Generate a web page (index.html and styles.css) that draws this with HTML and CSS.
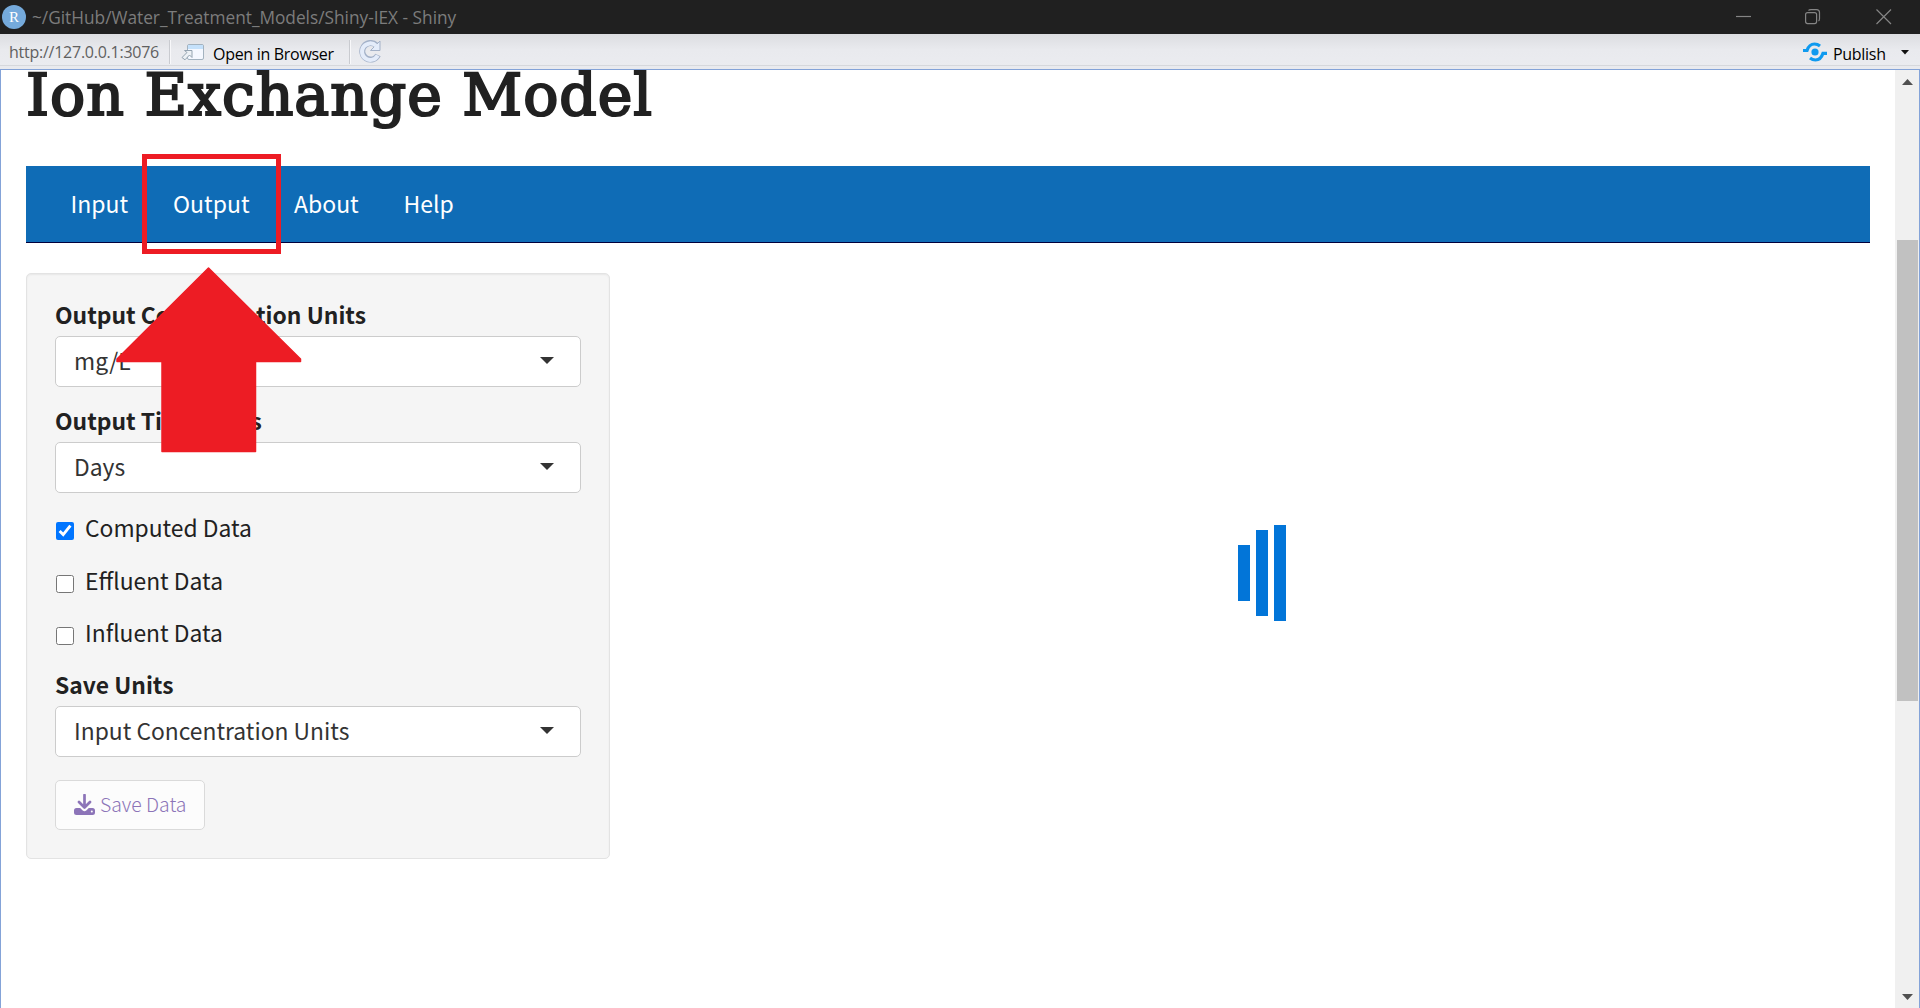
FILE: index.html
```html
<!DOCTYPE html>
<html lang="en">
<head>
<meta charset="utf-8">
<title>~/GitHub/Water_Treatment_Models/Shiny-IEX - Shiny</title>
<link rel="stylesheet" href="styles.css">
</head>
<body>
<div class="window">
  <header class="titlebar">
    <svg class="logo" width="24" height="24" viewBox="0 0 24 24"><circle cx="12" cy="12" r="12" fill="#75aadb"/><text class="logo-letter" x="12" y="17" text-anchor="middle">R</text></svg>
    <span class="titlebar-text">~/GitHub/Water_Treatment_Models/Shiny-IEX - Shiny</span>
    <svg class="controls" width="160" height="34" viewBox="0 0 160 34" fill="none" stroke="#858585" stroke-width="1.2">
      <path d="M0 16.500H15"/>
      <rect x="69.600" y="12.600" width="11" height="11" rx="2"/>
      <path d="M72.500 10.500Q73 9.600 75 9.600H80.500Q83.500 9.600 83.500 12.600V18.500Q83.500 20.500 82.500 21"/>
      <path d="M140.500 9.500L155 24M155 9.500L140.500 24"/>
    </svg>
  </header>
  <div class="toolbar">
    <span class="url">http://127.0.0.1:3076</span>
    <span class="divider"></span>
    <svg class="open-icon" width="24" height="18" viewBox="0 0 24 18">
      <rect x="6.500" y="1.500" width="16" height="15" rx="1.500" fill="#f5f8ff" stroke="#a3b2bf"/>
      <path d="M7 2H22V6H7Z" fill="#c5e1fb"/>
      <path d="M1 14.500L6 9.500L3.500 7.500H11V14.500L8.500 12L4 16.800Z" fill="#edf1f5" stroke="#94a3b0"/>
    </svg>
    <span class="open-text">Open in Browser</span>
    <span class="divider divider-second"></span>
    <svg class="refresh" width="24" height="24" viewBox="0 0 24 24">
      <path d="M18 5A8.300 8.300 0 1 0 20 15" fill="none" stroke="#a3b1c8" stroke-width="6"/>
      <path d="M22 1V10.500H12.500Z" fill="#e4ecfa" stroke="#a3b1c8"/>
      <path d="M18 5.600A8.300 8.300 0 1 0 19.700 15.500" fill="none" stroke="#e4ecfa" stroke-width="4"/>
    </svg>
    <svg class="publish-icon" width="24" height="20" viewBox="0 0 24 20">
      <circle cx="12" cy="10" r="3.600" fill="#0f9aef"/>
      <path d="M0 8.500H4C5.500 4 8 2 11.500 2Q14.500 2 17 4M24 11.300H20C18.500 16 16 18 12.500 18Q9.500 18 7 16" fill="none" stroke="#0f9aef" stroke-width="3.200"/>
    </svg>
    <span class="publish-text">Publish</span>
    <svg class="publish-caret" width="8" height="5" viewBox="0 0 8 5"><path d="M0 0H8L4 4.500Z" fill="#111"/></svg>
  </div>
  <div class="viewport">
    <main class="page">
      <h1 class="heading"><span class="heading-text">Ion Exchange Model</span></h1>
      <nav class="navbar">
        <a class="tab tab-input">Input</a><a class="tab tab-output">Output</a><a class="tab tab-about">About</a><a class="tab tab-help">Help</a>
      </nav>
      <div class="content">
        <section class="panel">
          <div class="label label-conc">Output Concentration Units</div>
          <div class="select"><span class="value">mg/L</span><i class="caret"></i></div>
          <div class="label label-time">Output Time Units</div>
          <div class="select"><span class="value">Days</span><i class="caret"></i></div>
          <div class="checks">
            <label class="check"><input class="box" type="checkbox" checked><span>Computed Data</span></label>
            <label class="check"><input class="box" type="checkbox"><span>Effluent Data</span></label>
            <label class="check"><input class="box" type="checkbox"><span>Influent Data</span></label>
          </div>
          <div class="label label-save">Save Units</div>
          <div class="select"><span class="value">Input Concentration Units</span><i class="caret"></i></div>
          <div class="save">
            <svg class="save-icon" width="21" height="21" viewBox="0 0 21 21">
              <path d="M10.500 1V13M5 8L10.500 13.500L16 8" fill="none" stroke="#8c74b8" stroke-width="2.700" stroke-linecap="round" stroke-linejoin="round"/>
              <path d="M2.500 14H6.200L8.700 16.500Q10.500 18 12.300 16.500L14.800 14H18.500Q21 14 21 16.500V18.500Q21 21 18.500 21H2.500Q0 21 0 18.500V16.500Q0 14 2.500 14Z" fill="#8c74b8"/>
              <circle cx="17.800" cy="17.500" r="1" fill="#fcfcfc"/>
            </svg>
            <span class="save-text">Save Data</span>
          </div>
        </section>
        <div class="spinner"><i class="bar bar-short"></i><i class="bar bar-mid"></i><i class="bar bar-tall"></i></div>
      </div>
    </main>
    <div class="scrollbar">
      <svg class="up" width="11" height="6" viewBox="0 0 11 6"><path d="M0 6L5.500 0L11 6Z" fill="#505050"/></svg>
      <i class="thumb"></i>
      <svg class="down" width="11" height="6" viewBox="0 0 11 6"><path d="M0 0H11L5.500 6Z" fill="#505050"/></svg>
    </div>
  </div>
  <div class="highlight"></div>
  <svg class="arrow" width="186" height="186" viewBox="0 0 186 186"><path d="M92.500 1L184.500 92V94.500H139.500V184.500H46V94.500H1V92Z" fill="#ed1c24" stroke="#ed1c24" stroke-width="1.500" stroke-linejoin="round"/></svg>
</div>
</body>
</html>
```

FILE: styles.css
```css
* { box-sizing: border-box; }
body { margin: 0; background: #fff; }
.window {
  position: relative;
  display: flex;
  flex-direction: column;
  width: 1920px;
  height: 1008px;
  overflow: hidden;
  font-family: "Noto Sans CJK SC", "Noto Sans", sans-serif;
  color: #212121;
}
.window svg { flex: none; }

.titlebar {
  display: flex;
  align-items: center;
  height: 34px;
  padding: 0 19px 0 2px;
  background: #202020;
  color: #7c7c7c;
  font: 17.3px/34px "Open Sans", sans-serif;
}
.logo-letter { font: 15px "Liberation Serif", serif; fill: #fff; }
.titlebar-text { margin-left: 6px; padding-top: 1px; white-space: nowrap; letter-spacing: -0.01px; }
.controls { margin-left: auto; margin-right: 5px; }

.toolbar {
  display: flex;
  align-items: center;
  height: 35px;
  padding: 0 11px 0 9px;
  background: linear-gradient(#dcdde1, #e9eaee 45%, #ebecf0);
  box-shadow: inset 0 -3px #e9eaee, inset 0 -4px #d6d8dc;
  font: 16px/32px "Open Sans", sans-serif;
  color: #000;
}
.url { width: 160px; padding-top: 1px; color: #606060; white-space: nowrap; letter-spacing: -0.25px; }
.divider { width: 2px; height: 24px; background: #c9cbd0; border-right: 1px solid #f8f8fa; }
.open-icon { margin-left: 10px; margin-top: 1px; }
.open-text { width: 122px; margin-left: 8px; padding-top: 4px; white-space: nowrap; letter-spacing: -0.3px; }
.divider-second { margin-left: 14px; }
.refresh { margin-left: 7px; }
.publish-icon { margin-left: auto; }
.publish-text { width: 53px; margin-left: 6px; padding-top: 4px; letter-spacing: -0.3px; }
.publish-caret { margin-left: 15px; margin-top: 2px; }

.viewport {
  display: flex;
  height: 939px;
  border: 1px solid #84a3d8;
  border-bottom: 0;
  overflow: hidden;
}
.page { flex: 1; padding: 0 25px; }
.heading { height: 96px; margin: 0; font-weight: normal; }
.heading-text {
  display: inline-block;
  font: 58.5px/70px "DejaVu Serif", serif;
  letter-spacing: 0.95px;
  margin-top: -10px;
  white-space: nowrap;
  -webkit-text-stroke: 2.2px #212121;
}

.navbar {
  display: flex;
  height: 77px;
  padding-left: 44.5px;
  background: #0f6cb6;
  border-bottom: 1px solid #00003c;
  color: #fff;
  font-size: 23px;
  line-height: 74px;
}
.tab-input { width: 102.5px; }
.tab-output { width: 121px; }
.tab-about { width: 109.5px; }

.content { display: flex; margin-top: 30px; }
.panel {
  width: 584px;
  height: 586px;
  padding: 22px 28px 27px;
  background: #f5f5f5;
  border: 1px solid #e3e3e3;
  border-radius: 5px;
  box-shadow: inset 0 1px 2px rgba(0, 0, 0, 0.06);
  font-size: 22.85px;
}
.label { height: 40px; line-height: 36px; font-weight: bold; }
.label-time { margin-top: 15px; }
.label-save { margin-top: 8px; }
.select {
  display: flex;
  align-items: center;
  justify-content: space-between;
  height: 51px;
  padding: 0 26px 0 18px;
  border: 1px solid #ccc;
  border-radius: 5px;
  background: #fff;
  color: #333;
}
.value { line-height: 30px; padding-bottom: 3px; }
.caret {
  border: 7px solid transparent;
  border-top-color: #333;
  border-bottom: 0;
  margin-top: -3px;
}
.checks { height: 165px; padding-top: 8px; }
.check { display: flex; align-items: center; height: 52.6px; line-height: 52px; }
.box { width: 18px; height: 18px; margin: 8px 11px 0 1px; }
.save {
  display: flex;
  align-items: center;
  width: 150px;
  height: 50px;
  margin-top: 23px;
  padding-left: 18px;
  border: 1px solid #dadada;
  border-radius: 5px;
  background: #fcfcfc;
  color: #8c74b8;
  font-size: 19.4px;
  font-weight: 300;
  line-height: 48px;
}
.save-icon { margin-top: -1px; }
.save-text { margin-left: 5px; padding-bottom: 3px; white-space: nowrap; }

.spinner { display: flex; align-items: center; gap: 6px; height: 96px; margin: 252px 0 0 628px; }
.bar { width: 12px; background: #0275d8; }
.bar-short { height: 56px; }
.bar-mid { height: 86px; }
.bar-tall { height: 96px; }

.scrollbar {
  display: flex;
  flex-direction: column;
  align-items: center;
  width: 24px;
  padding: 9px 1px 8px 2px;
  background: #f0f0f0;
}
.thumb { width: 21px; height: 461px; margin-top: 155px; background: #c1c1c1; }
.down { margin-top: auto; }

.highlight {
  position: absolute;
  left: 142px;
  top: 154px;
  width: 139px;
  height: 100px;
  border: 5px solid #ed1c24;
}
.arrow { position: absolute; left: 116px; top: 267px; }
```
